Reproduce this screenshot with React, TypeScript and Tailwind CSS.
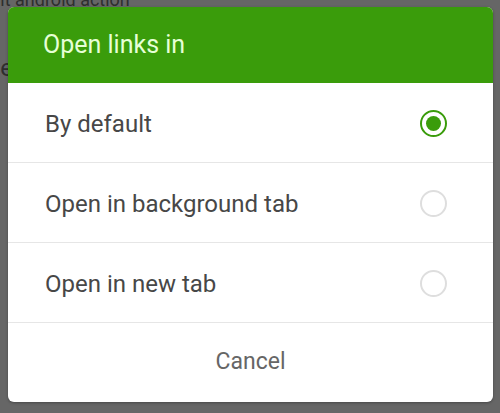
import { useState } from 'react'

const options = ['By default', 'Open in background tab', 'Open in new tab']

export default function App() {
  const [selected, setSelected] = useState(0)

  return (
    <div className="relative h-[413px] w-[500px] overflow-hidden bg-[#666666]" style={{ fontFamily: 'Roboto, "Noto Sans", sans-serif' }}>
      {/* page behind the dim overlay */}
      <div className="absolute left-[-47px] top-[-14px] text-[18px] text-[#2e2e2e]">Default android action</div>
      <div className="absolute left-[-14px] top-[50px] text-[24px] text-[#2e2e2e]">Se</div>

      <div className="relative ml-[8px] mt-[7px] w-[485px] overflow-hidden rounded-[6px] bg-white shadow-[0_1px_3px_rgba(0,0,0,0.3)]">
        <div className="flex h-[76px] items-center bg-[#3a9c0b] pl-[35px] text-[25px] text-[#e6ffd6]">
          Open links in
        </div>

        {options.map((label, i) => (
          <button
            key={label}
            onClick={() => setSelected(i)}
            className="flex h-[80px] w-full items-center justify-between border-b border-[#e6e6e6] pl-[37px] pr-[46px] pt-[2px] text-left text-[24px] text-[#474747]"
          >
            <span>{label}</span>
            {selected === i ? (
              <span className="flex h-[27px] w-[27px] items-center justify-center rounded-full border-[2px] border-[#3a9c0b]">
                <span className="h-[15px] w-[15px] rounded-full bg-[#3a9c0b]" />
              </span>
            ) : (
              <span className="h-[27px] w-[27px] rounded-full border-[2px] border-[#dedede]" />
            )}
          </button>
        ))}

        <button className="flex h-[79px] w-full items-center justify-center text-[23px] text-[#666666]">
          Cancel
        </button>
      </div>
    </div>
  )
}
